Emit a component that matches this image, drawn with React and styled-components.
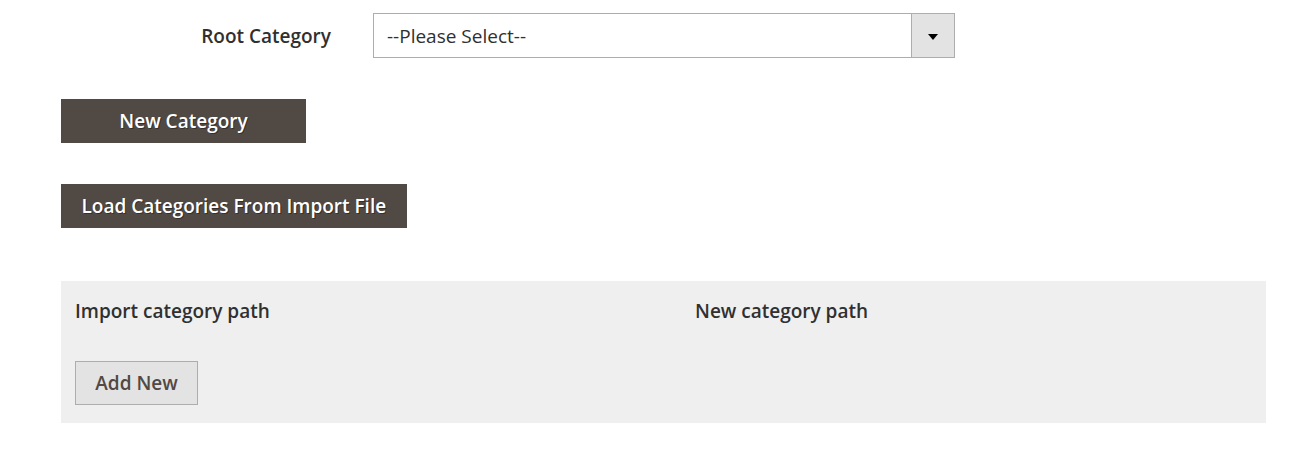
import React from 'react';
import styled, { createGlobalStyle } from 'styled-components';

const GlobalStyle = createGlobalStyle`
  body {
    margin: 0;
    background: #ffffff;
    font-family: "Open Sans", "Liberation Sans", sans-serif;
    color: #303030;
  }
`;

const Page = styled.div`
  padding: 13px 44px 0 61px;
  display: flex;
  flex-direction: column;
`;

const FieldRow = styled.div`
  display: flex;
  align-items: center;
  gap: 42px;
`;

const Label = styled.label`
  width: 270px;
  text-align: right;
  font-size: 19px;
  font-weight: 600;
  color: #303030;
`;

const Select = styled.div`
  width: 582px;
  height: 45px;
  box-sizing: border-box;
  border: 1px solid #adadad;
  background: #fff;
  display: flex;
  align-items: stretch;
`;

const SelectValue = styled.div`
  flex: 1;
  display: flex;
  align-items: center;
  padding-left: 13px;
  font-size: 19px;
  color: #303030;
`;

const SelectArrow = styled.div`
  width: 43px;
  border-left: 1px solid #adadad;
  background: #e3e3e3;
  display: flex;
  align-items: center;
  justify-content: center;
  padding-top: 3px;
  box-sizing: border-box;
`;

const Caret = styled.span`
  width: 0;
  height: 0;
  border-left: 5px solid transparent;
  border-right: 5px solid transparent;
  border-top: 6px solid #000;
`;

const PrimaryButton = styled.button`
  align-self: flex-start;
  margin-top: ${p => p.$top}px;
  width: ${p => (p.$width ? `${p.$width}px` : 'auto')};
  height: 44px;
  padding: 0 20.5px;
  border: none;
  background: #514943;
  color: #fff;
  font-family: inherit;
  font-size: 19px;
  font-weight: 600;
  text-shadow: 1px 1px 0 rgba(0, 0, 0, 0.35);
  cursor: pointer;
`;

const Panel = styled.div`
  margin-top: 53px;
  background: #efefef;
  padding: 17px 14px 18px;
  display: flex;
  flex-direction: column;
`;

const HeaderRow = styled.div`
  display: grid;
  grid-template-columns: 620px 1fr;
`;

const ColumnTitle = styled.div`
  font-size: 19px;
  font-weight: 600;
  color: #303030;
`;

const SecondaryButton = styled.button`
  align-self: flex-start;
  margin-top: 37px;
  width: 123px;
  height: 44px;
  border: 1px solid #adadad;
  background: #e3e3e3;
  color: #514943;
  font-family: inherit;
  font-size: 19px;
  font-weight: 600;
  cursor: pointer;
`;

export default function App() {
  return (
    <>
      <GlobalStyle />
      <Page>
        <FieldRow>
          <Label>Root Category</Label>
          <Select>
            <SelectValue>--Please Select--</SelectValue>
            <SelectArrow>
              <Caret />
            </SelectArrow>
          </Select>
        </FieldRow>
        <PrimaryButton $top={41} $width={245}>New Category</PrimaryButton>
        <PrimaryButton $top={41}>Load Categories From Import File</PrimaryButton>
        <Panel>
          <HeaderRow>
            <ColumnTitle>Import category path</ColumnTitle>
            <ColumnTitle>New category path</ColumnTitle>
          </HeaderRow>
          <SecondaryButton>Add New</SecondaryButton>
        </Panel>
      </Page>
    </>
  );
}
